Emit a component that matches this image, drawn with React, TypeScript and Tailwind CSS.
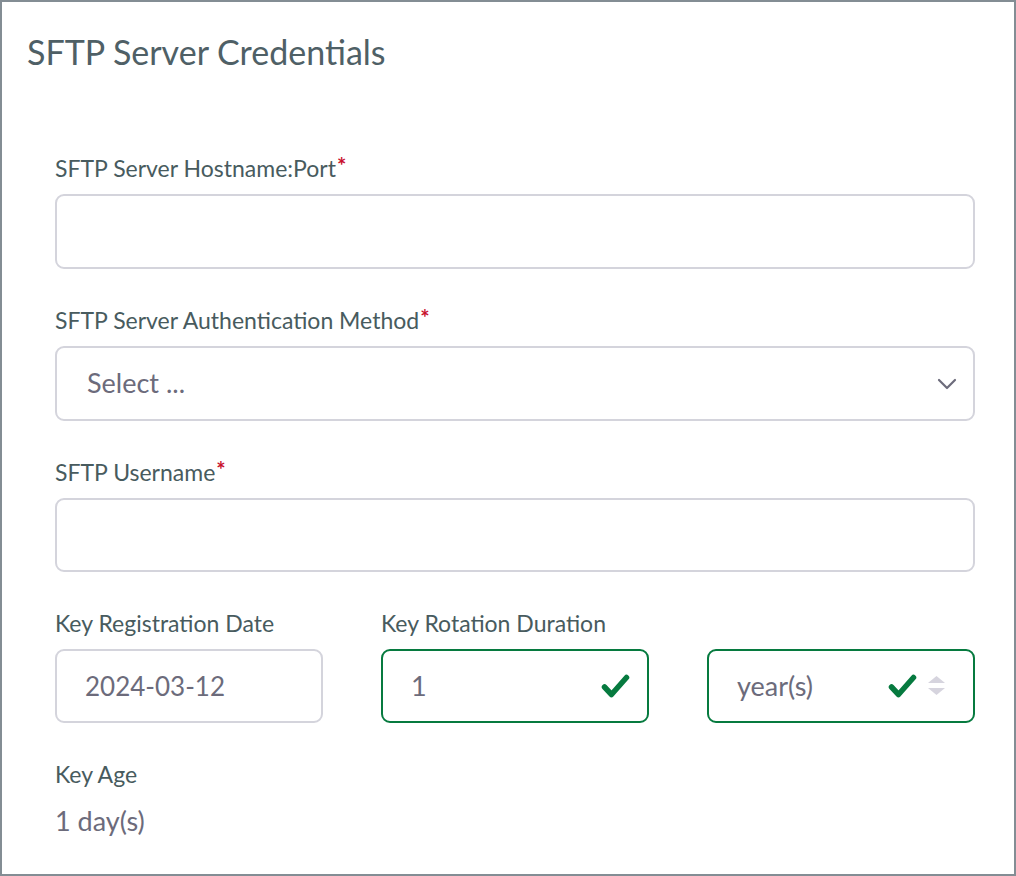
import { ReactNode } from "react";

const font = { fontFamily: "Lato, 'Noto Sans', sans-serif" };

const Label = ({ children, required }: { children: ReactNode; required?: boolean }) => (
  <div className="h-[30px] text-[23px] leading-[30px] text-[#485b5e] flex items-start">
    <span>{children}</span>
    {required && (
      <span className="ml-[1px] text-[#c8102e] text-[22px] leading-none font-bold relative top-[2px]">*</span>
    )}
  </div>
);

const Check = () => (
  <svg width="29" height="26" viewBox="0 0 29 26" fill="none">
    <path d="M3.5 14 L10.5 21.5 L25.5 4.5" stroke="#067a3f" strokeWidth="5.5" strokeLinecap="round" strokeLinejoin="round" />
  </svg>
);

const Field = ({ label, required, children }: { label: string; required?: boolean; children: ReactNode }) => (
  <div className="flex flex-col">
    <Label required={required}>{label}</Label>
    <div className="mt-[11px]">{children}</div>
  </div>
);

const App = () => {
  return (
    <div style={font} className="w-[1016px] h-[876px] bg-white border-2 border-[#838d94] box-border">
      <div className="pl-[25px] pt-[29px]">
        <h1 className="text-[34px] leading-[42px] text-[#4f6066] font-normal">SFTP Server Credentials</h1>
      </div>
      <div className="pl-[53px] pr-[39px] mt-[80px] flex flex-col gap-[36px]">
        <Field label="SFTP Server Hostname:Port" required>
          <div className="h-[75px] rounded-[9px] border-2 border-[#d4d4dc]" />
        </Field>
        <Field label="SFTP Server Authentication Method" required>
          <div className="h-[75px] rounded-[9px] border-2 border-[#d4d4dc] flex items-center justify-between pl-[30px] pr-[16px]">
            <span className="text-[27px] text-[#6c6b7b]">Select ...</span>
            <svg width="20" height="12" viewBox="0 0 20 12" fill="none">
              <path d="M2 2 L10 10 L18 2" stroke="#6c6b7b" strokeWidth="2.2" strokeLinecap="round" strokeLinejoin="round" />
            </svg>
          </div>
        </Field>
        <Field label="SFTP Username" required>
          <div className="h-[74px] rounded-[9px] border-2 border-[#d4d4dc]" />
        </Field>
        <div className="grid grid-cols-3 gap-x-[58px]">
          <Field label="Key Registration Date">
            <div className="h-[74px] rounded-[9px] border-2 border-[#d4d4dc] flex items-center pl-[28px]">
              <span className="text-[26px] text-[#6c6b7b]">2024-03-12</span>
            </div>
          </Field>
          <Field label="Key Rotation Duration">
            <div className="h-[74px] rounded-[9px] border-2 border-[#067a3f] flex items-center justify-between pl-[28px] pr-[17px]">
              <span className="text-[27px] text-[#6c6b7b]">1</span>
              <Check />
            </div>
          </Field>
          <div className="flex flex-col">
            <div className="h-[30px]" />
            <div className="mt-[11px] h-[74px] rounded-[9px] border-2 border-[#067a3f] flex items-center pl-[28px] pr-[27px]">
              <span className="text-[27px] text-[#6c6b7b] flex-1">year(s)</span>
              <Check />
              <svg className="ml-[10px]" width="19" height="20" viewBox="0 0 19 20">
                <path d="M9.5 0 L18 7 L1 7 Z" fill="#d6d4de" />
                <path d="M1 12 L18 12 L9.5 19 Z" fill="#d6d4de" />
              </svg>
            </div>
          </div>
        </div>
        <div className="flex flex-col">
          <Label>Key Age</Label>
          <div className="mt-[14px] text-[27px] leading-[36px] text-[#6c6b7b]">1 day(s)</div>
        </div>
      </div>
    </div>
  );
};

export default App;
